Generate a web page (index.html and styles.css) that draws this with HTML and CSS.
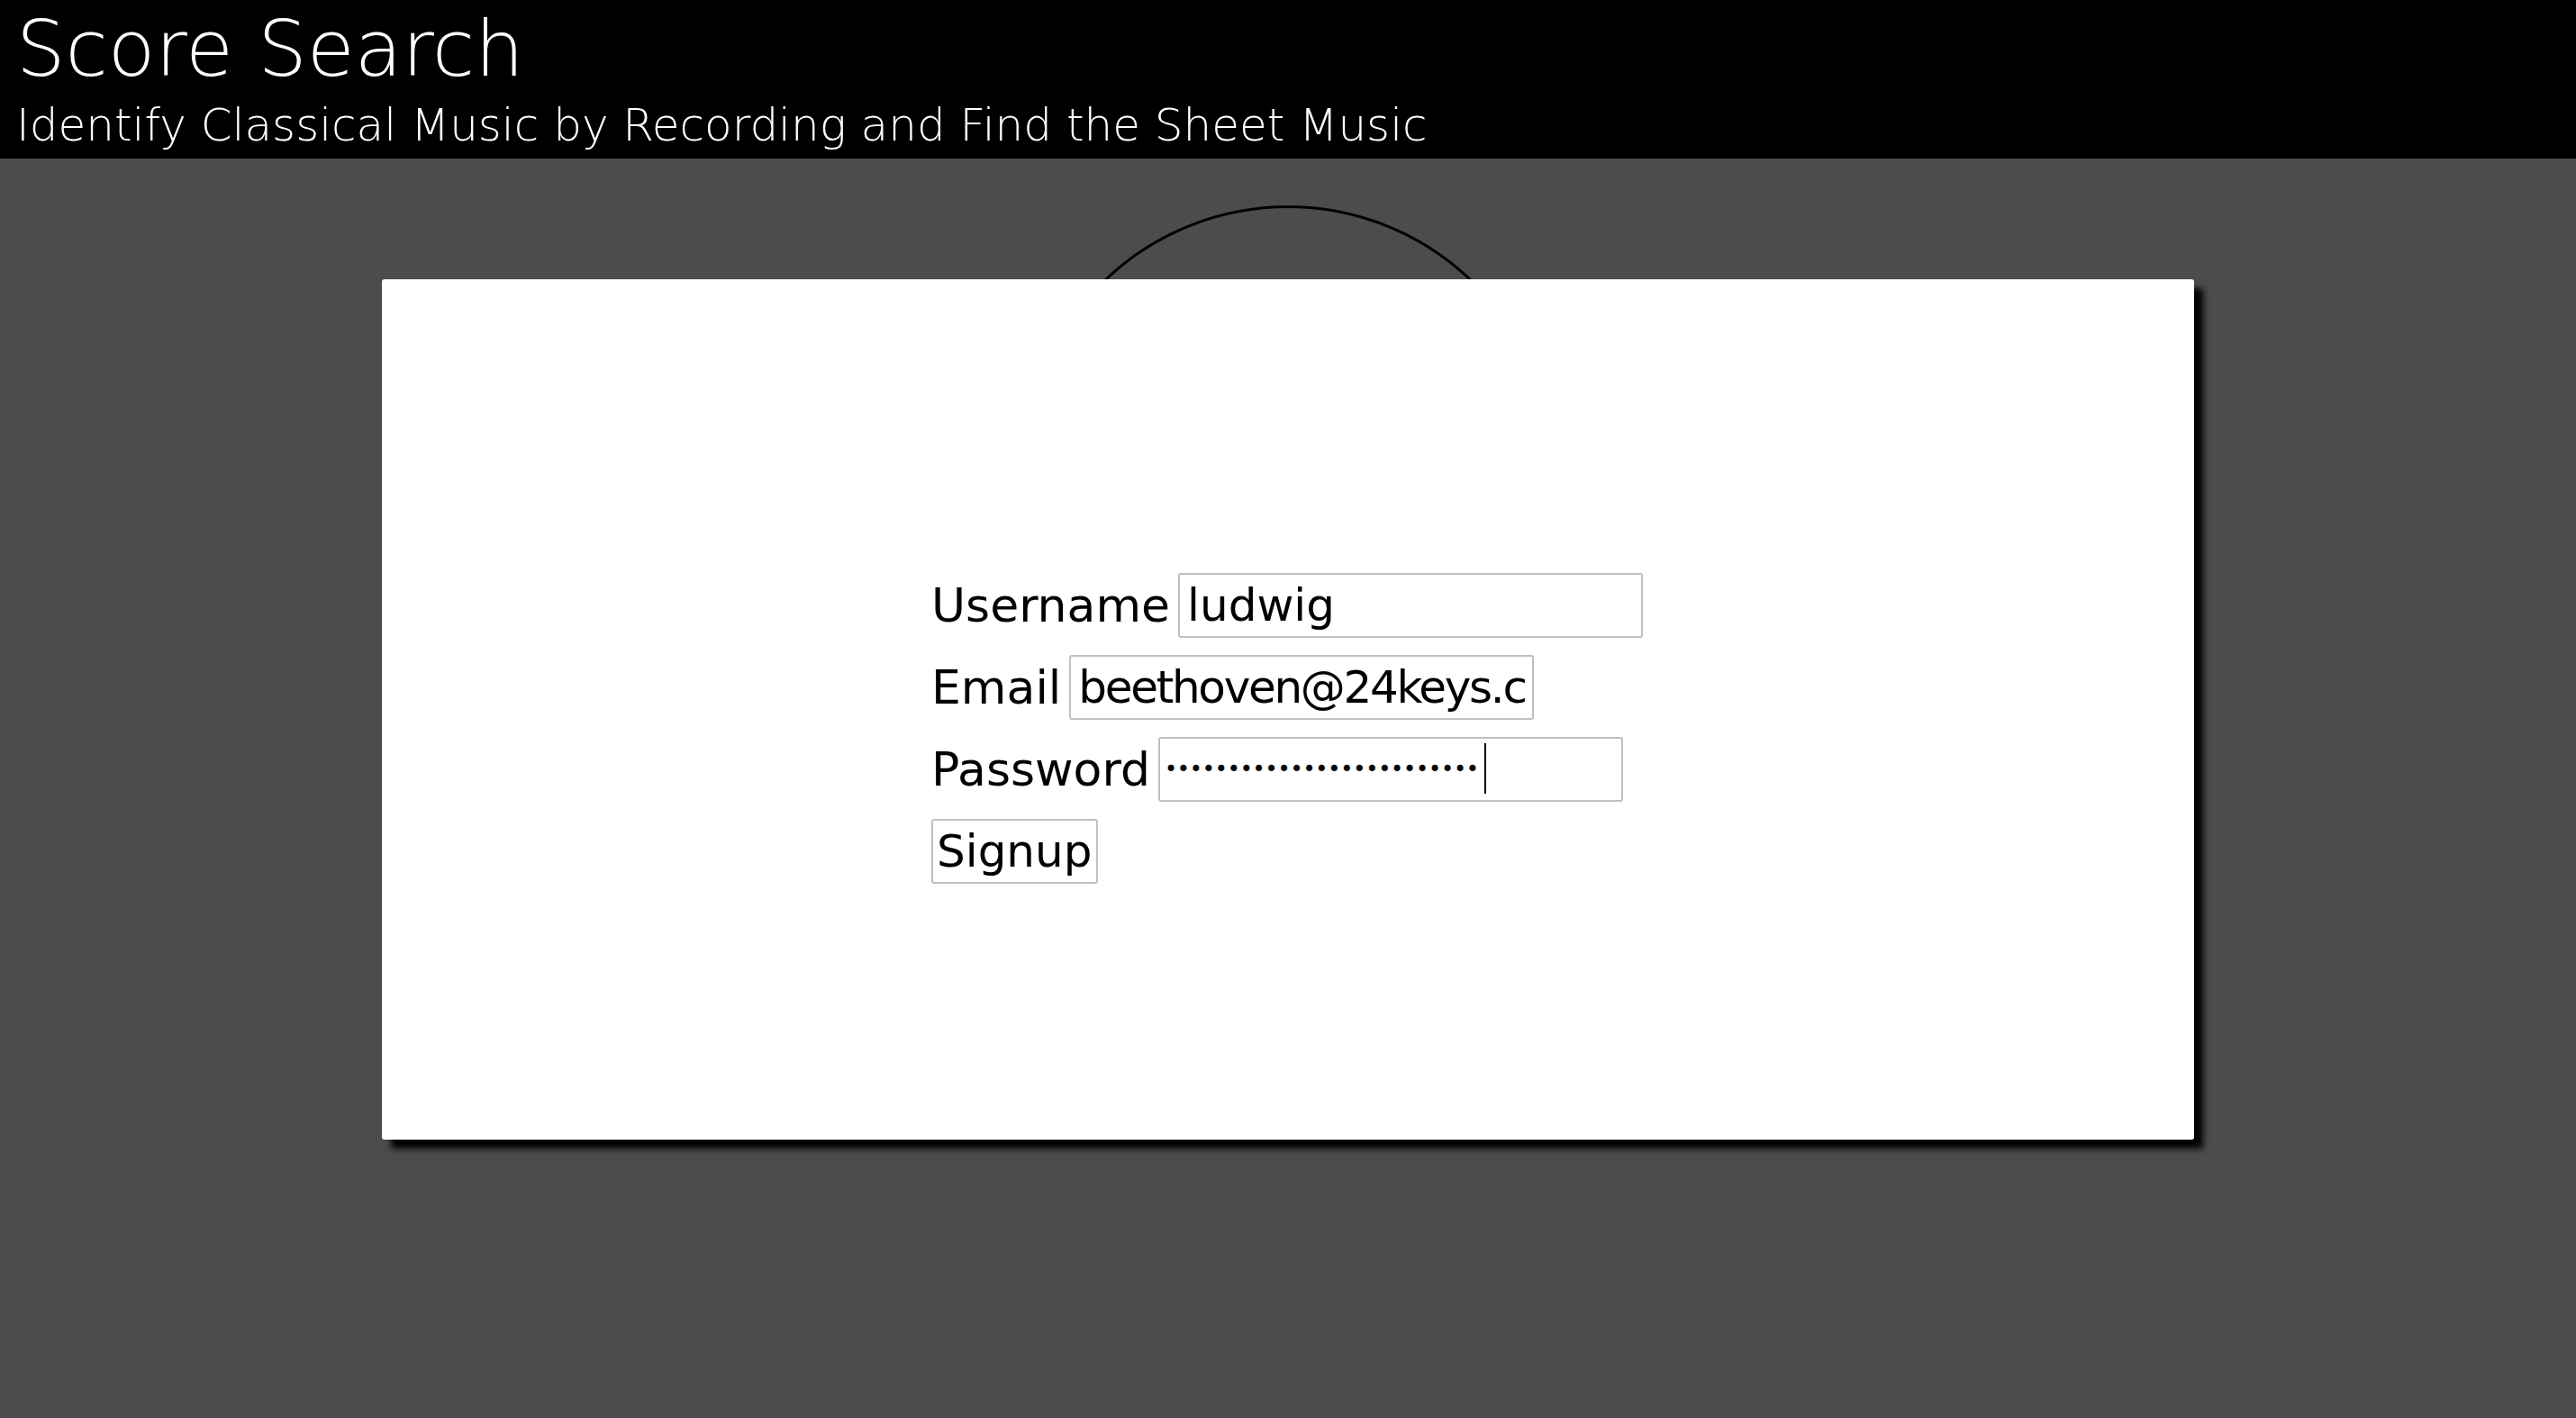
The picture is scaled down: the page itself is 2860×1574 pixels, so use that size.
FILE: index.html
```html
<!DOCTYPE html>
<html lang="en">
<head>
<meta charset="utf-8">
<title>Score Search</title>
<link rel="stylesheet" href="styles.css">
</head>
<body>
<header class="site-header">
  <h1 class="site-title">Score Search</h1>
  <p class="site-tagline">Identify Classical Music by Recording and Find the Sheet Music</p>
</header>
<main class="stage">
  <div class="record-ring"></div>
  <section class="card">
    <form class="signup-form">
      <div class="field-row">
        <label class="field-label" for="username">Username</label>
        <input class="field-input" id="username" type="text" value="ludwig">
      </div>
      <div class="field-row">
        <label class="field-label" for="email">Email</label>
        <input class="field-input email-input" id="email" type="email" value="beethoven@24keys.com">
      </div>
      <div class="field-row">
        <label class="field-label" for="password">Password</label>
        <span class="password-wrap">
          <input class="field-input password-input" id="password" type="password" value="moonlightsonata1801opus27">
          <span class="fake-caret"></span>
        </span>
      </div>
      <div class="field-row">
        <button class="submit-btn" type="button">Signup</button>
      </div>
    </form>
  </section>
</main>
</body>
</html>
```
FILE: styles.css
```css
html, body {
  margin: 0;
  padding: 0;
}
body {
  background: #4c4c4c;
  font-family: "DejaVu Sans", "Liberation Sans", sans-serif;
  color: #000;
  min-height: 1574px;
  overflow: hidden;
}
.site-header {
  background: #000;
  color: #fff;
  height: 176px;
  box-sizing: border-box;
  padding: 4px 0 0 18px;
}
.site-title {
  margin: 0;
  font-size: 86px;
  font-weight: 200;
  line-height: 100px;
  white-space: nowrap;
}
.site-tagline {
  margin: 6px 0 0;
  font-size: 50px;
  font-weight: 200;
  line-height: 58px;
  white-space: nowrap;
}
.stage {
  position: relative;
  padding-top: 134px;
}
.record-ring {
  position: absolute;
  top: 52px;
  left: 50%;
  width: 590px;
  height: 590px;
  margin-left: -295px;
  box-sizing: border-box;
  border: 3px solid #000;
  border-radius: 50%;
}
.card {
  position: relative;
  width: 2012px;
  height: 955px;
  margin: 0 auto;
  background: #fff;
  border-radius: 3px;
  box-shadow: 10px 10px 7px #000;
  box-sizing: border-box;
  padding: 326px 0 0 610px;
}
.signup-form {
  display: flex;
  flex-direction: column;
  gap: 19px;
}
.field-row {
  display: flex;
  align-items: center;
  gap: 9px;
  height: 72px;
}
.field-label {
  font-size: 52px;
  line-height: 72px;
  white-space: nowrap;
}
.field-input {
  box-sizing: border-box;
  width: 516px;
  height: 72px;
  margin: 0;
  padding: 0 8px;
  border: 2px solid #c0c0c0;
  border-radius: 3px;
  background: #fff;
  color: #000;
  font-family: "DejaVu Sans", "Liberation Sans", sans-serif;
  font-size: 50px;
  outline: none;
}
.email-input {
  letter-spacing: -2.3px;
}
.password-wrap {
  position: relative;
  display: block;
}
.password-input {
  font-size: 24px;
  letter-spacing: -0.2px;
  padding-left: 5px;
}
.fake-caret {
  position: absolute;
  left: 362px;
  top: 7px;
  width: 2px;
  height: 56px;
  background: #000;
}
.submit-btn {
  box-sizing: border-box;
  height: 72px;
  margin: 0;
  padding: 0 4px;
  border: 2px solid #c0c0c0;
  border-radius: 3px;
  background: #fff;
  color: #000;
  font-family: "DejaVu Sans", "Liberation Sans", sans-serif;
  font-size: 50px;
  line-height: 1;
}
```
